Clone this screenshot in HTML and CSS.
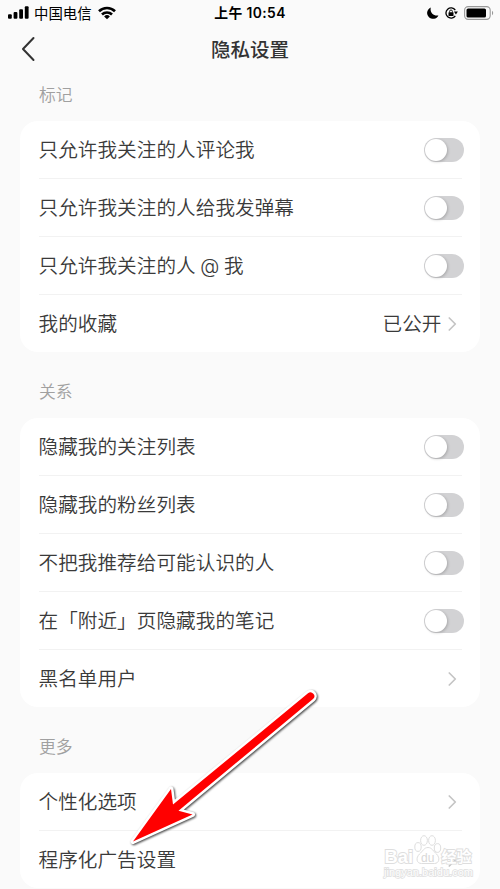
FILE: index.html
```html
<!DOCTYPE html>
<html lang="zh-CN">
    <head>
        <meta charset="utf-8">
        <title>隐私设置</title>
        <meta name="viewport" content="width=device-width, initial-scale=1">
        <link rel="stylesheet" href="styles.css">
    </head>
    <body>
        <!-- Status bar -->
        <div class="status">
            <div class="status-left">
                <svg class="signal" width="21" height="13" viewBox="0 0 21 13">
                    <rect x="0" y="8.3" width="3.8" height="4.5" rx="1"/>
                    <rect x="5.6" y="6" width="3.8" height="6.8" rx="1"/>
                    <rect x="11.2" y="3.2" width="3.8" height="9.6" rx="1"/>
                    <rect x="16.8" y="0.2" width="3.8" height="12.6" rx="1"/>
                </svg>
                <span class="carrier">中国电信</span>
                <svg class="wifi" width="18" height="14" viewBox="0 0 18 14">
                    <path d="M1 5.3a11.4 11.4 0 0 1 16 0M4 8.5a7.2 7.2 0 0 1 10 0" fill="none" stroke="#000" stroke-width="2.6"/>
                    <path d="M9 13.2L6.1 10.4a4.2 4.2 0 0 1 5.8 0z"/>
                </svg>
            </div>
            <div class="clock">上午 10:54</div>
            <div class="status-right">
                <svg width="12" height="12" viewBox="0 0 12 12">
                    <path d="M3.8 0.5A5.9 5.9 0 1 0 11.4 8.4C6.5 9.4 2.6 5.5 3.8 0.5z"/>
                </svg>
                <svg class="lock" width="13" height="12" viewBox="0 0 13 12">
                    <path d="M10.3 3.2A5.1 5.1 0 1 0 10.3 8.8" fill="none" stroke="#000" stroke-width="1.3"/>
                    <path d="M8.9 4.6h4L10.9 7.4z"/>
                    <rect x="3.5" y="5.3" width="5" height="3.7" rx="0.5"/>
                    <path d="M4.6 5.5V4.4a1.4 1.4 0 0 1 2.8 0v1.1" fill="none" stroke="#000" stroke-width="0.9"/>
                </svg>
                <svg class="battery" width="30" height="14" viewBox="0 0 30 14">
                    <rect x="0.6" y="0.6" width="25.6" height="12.8" rx="3.6" fill="none" stroke="#999" stroke-width="1.1"/>
                    <rect x="2.5" y="2.5" width="19.5" height="9" rx="1.6"/>
                    <path d="M28 4.8v4.4a2.6 2.6 0 0 0 0-4.4z" fill="#999"/>
                </svg>
            </div>
        </div>

        <header class="nav">
            <svg class="back" width="14" height="26" viewBox="0 0 14 26">
                <path d="M12.5 2L2 13L12.5 24" fill="none" stroke="#333" stroke-width="2" stroke-linecap="round" stroke-linejoin="round"/>
            </svg>
            <h1 class="nav-title">隐私设置</h1>
        </header>

        <main class="settings">
            <section class="group">
                <h2 class="group-title">标记</h2>
                <ul class="card">
                    <li class="row"><span>只允许我关注的人评论我</span><i class="toggle"></i></li>
                    <li class="row"><span>只允许我关注的人给我发弹幕</span><i class="toggle"></i></li>
                    <li class="row"><span>只允许我关注的人 @ 我</span><i class="toggle"></i></li>
                    <li class="row">
                        <span>我的收藏</span>
                        <span class="value">已公开</span>
                        <svg class="arrow" width="9" height="14" viewBox="0 0 9 14"><path d="M1.3 1L7.3 7L1.3 13"/></svg>
                    </li>
                </ul>
            </section>

            <section class="group">
                <h2 class="group-title">关系</h2>
                <ul class="card">
                    <li class="row"><span>隐藏我的关注列表</span><i class="toggle"></i></li>
                    <li class="row"><span>隐藏我的粉丝列表</span><i class="toggle"></i></li>
                    <li class="row"><span>不把我推荐给可能认识的人</span><i class="toggle"></i></li>
                    <li class="row"><span>在「附近」页隐藏我的笔记</span><i class="toggle"></i></li>
                    <li class="row">
                        <span>黑名单用户</span>
                        <svg class="arrow" width="9" height="14" viewBox="0 0 9 14"><path d="M1.3 1L7.3 7L1.3 13"/></svg>
                    </li>
                </ul>
            </section>

            <section class="group">
                <h2 class="group-title">更多</h2>
                <ul class="card">
                    <li class="row">
                        <span>个性化选项</span>
                        <svg class="arrow" width="9" height="14" viewBox="0 0 9 14"><path d="M1.3 1L7.3 7L1.3 13"/></svg>
                    </li>
                    <li class="row">
                        <span>程序化广告设置</span>
                        <svg class="arrow" width="9" height="14" viewBox="0 0 9 14"><path d="M1.3 1L7.3 7L1.3 13"/></svg>
                    </li>
                </ul>
            </section>
        </main>

        <!-- Pointer over the last row -->
        <svg class="pointer" width="200" height="170" viewBox="125 685 200 170">
            <path d="M133 841.5L171 789L173 804.5L308 693.3A3.6 3.6 0 0 1 313 699L178.5 810.8L192.5 814.5Z"/>
        </svg>

        <!-- Watermark -->
        <svg class="watermark" width="100" height="50" viewBox="380 832 100 50">
            <g class="paw">
                <ellipse cx="418" cy="847" rx="3.2" ry="4.4"/>
                <ellipse cx="424" cy="840.5" rx="3.4" ry="4.8"/>
                <ellipse cx="432" cy="840.5" rx="3.4" ry="4.8"/>
                <ellipse cx="437.5" cy="848" rx="3.2" ry="4.4"/>
                <path d="M428 847.5c4 0 5.5 4 8.5 6.5c4 4 2.5 9.5-2 9.5h-13c-5 0-6-5.5-2-9.5c3-2.5 4.5-6.5 8.5-6.5z"/>
            </g>
            <text class="mark-name" x="384.5" y="863" textLength="28.5" lengthAdjust="spacingAndGlyphs">Bai</text>
            <text class="mark-du" x="421" y="861.5" textLength="13.5">du</text>
            <text class="mark-cn" x="441.5" y="862" textLength="30">经验</text>
            <text class="mark-url" x="384" y="875.5" textLength="89" lengthAdjust="spacingAndGlyphs">jingyan.baidu.com</text>
        </svg>
    </body>
</html>
```
FILE: styles.css
```css
/* Reset */
* {
    margin: 0;
    padding: 0;
    box-sizing: border-box;
}

/* Base */
body {
    position: relative;
    height: 889px;
    overflow: hidden;
    font-family: "Noto Sans CJK SC", sans-serif;
    background: #fafafa;
    color: #333;
}

svg {
    display: block;
    flex: none;
}

/* Status bar */
.status {
    display: grid;
    grid-template-columns: 1fr auto 1fr;
    align-items: center;
    height: 25px;
    padding: 0 6px 0 8px;
    color: #000;
}

.status-left,
.status-right {
    display: flex;
    align-items: center;
}

.status-right {
    justify-content: flex-end;
}

.carrier {
    margin: 0 6px 0 5px;
    font-size: 14.4px;
    line-height: 24px;
}

.clock {
    margin-right: 2px;
    font-family: Inter, "Noto Sans CJK SC", sans-serif;
    font-size: 13.8px;
    font-weight: 600;
    line-height: 24px;
    letter-spacing: 0.4px;
}

.lock {
    margin: 0 6px;
}

/* Nav */
.nav {
    display: grid;
    grid-template-columns: 1fr auto 1fr;
    align-items: center;
    height: 48px;
    margin-bottom: -4px;
    padding: 0 21px;
}

.nav-title {
    font-size: 19.5px;
    font-weight: 500;
    line-height: 30px;
}

/* Groups */
.settings {
    padding: 0 20px;
}

.group {
    margin-bottom: 14px;
}

.group-title {
    height: 52px;
    padding-left: 19px;
    font-size: 16.8px;
    font-weight: 350;
    line-height: 51px;
    color: #a0a0a0;
}

.card {
    padding: 0 18.5px;
    list-style: none;
    background: #fff;
    border-radius: 18px;
}

.row {
    display: flex;
    align-items: center;
    height: 58px;
    border-bottom: 1px solid #f2f2f2;
    font-family: Inter, "Noto Sans CJK SC", sans-serif;
    font-size: 19.6px;
    font-weight: 350;
    line-height: 28px;
    letter-spacing: 0.06px;
    word-spacing: -1px;
    white-space: nowrap;
    color: #3a3a3a;
}

.row span {
    padding-top: 1px;
}

.row:last-child {
    height: 57px;
    border-bottom: 0;
}

.toggle {
    width: 40px;
    height: 24px;
    margin-left: auto;
    margin-right: -2px;
    padding: 1px;
    background: #d2d2d4;
    border-radius: 12px;
}

.toggle::before {
    content: "";
    display: block;
    width: 22px;
    height: 22px;
    background: #fff;
    border-radius: 50%;
    box-shadow: 1px 1px 3px rgba(0, 0, 0, 0.2);
}

.value {
    margin-left: auto;
}

.arrow {
    margin-left: auto;
    margin-right: 5px;
    fill: none;
    stroke: #c4c4c4;
    stroke-width: 1.7;
    stroke-linecap: round;
    stroke-linejoin: round;
}

.value + .arrow {
    margin-left: 6px;
}

/* Pointer */
.pointer {
    position: absolute;
    left: 125px;
    top: 685px;
    fill: #f00;
    stroke: #fff;
    stroke-width: 5;
    stroke-linejoin: round;
    paint-order: stroke;
    filter: drop-shadow(1px 1px 1px rgba(0, 0, 0, 0.75));
}

/* Watermark */
.watermark {
    position: absolute;
    left: 380px;
    top: 832px;
    font-family: "Liberation Sans", "Noto Sans CJK SC", sans-serif;
    fill: rgba(255, 255, 255, 0.7);
    stroke: #dedede;
    stroke-width: 1;
}

.watermark text {
    fill: #fff;
    paint-order: stroke;
    stroke-width: 1.8;
}

.mark-name {
    font-size: 18px;
    font-weight: bold;
}

.watermark .mark-du {
    font-size: 12px;
    fill: #d8d8d8;
    stroke: none;
}

.mark-cn {
    font-size: 15px;
    font-weight: bold;
}

.watermark .mark-url {
    font-size: 10px;
    stroke-width: 1.4;
}
```
